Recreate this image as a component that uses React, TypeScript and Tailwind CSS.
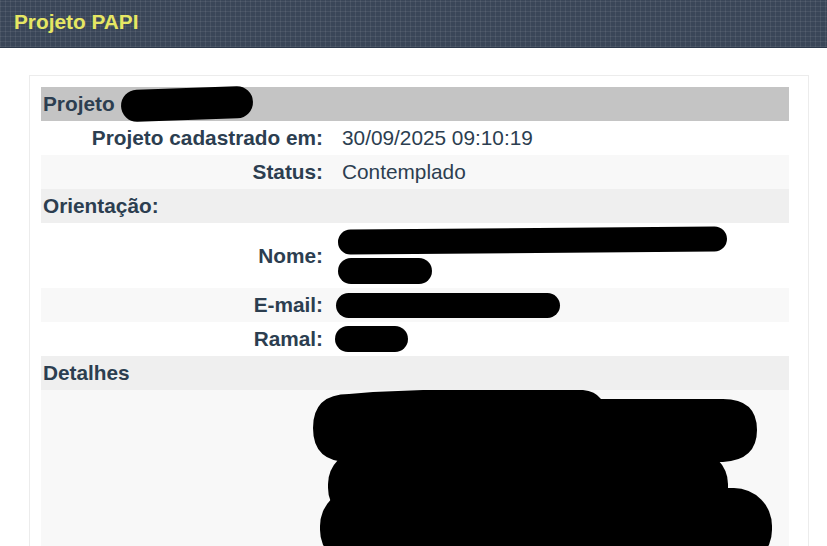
import React from "react";

const Label = ({ children }: { children: React.ReactNode }) => (
  <div className="flex items-center justify-end pr-[9px] font-bold">{children}</div>
);

const Blob = ({ w, h, className = "" }: { w: number; h: number; className?: string }) => (
  <span
    className={`block rounded-full bg-black ${className}`}
    style={{ width: w, height: h }}
  />
);

export default function App() {
  return (
    <div
      className="min-h-[546px] bg-white text-[#2c3e50]"
      style={{ fontFamily: '"Liberation Sans", Arial, sans-serif' }}
    >
      <header className="flex h-[48px] items-center border-b border-[#2d394b] bg-[#3a4658] bg-[repeating-linear-gradient(90deg,rgba(255,255,255,0.07)_0_1px,transparent_1px_5px),repeating-linear-gradient(0deg,rgba(255,255,255,0.07)_0_1px,transparent_1px_5px)] pb-[4px] pl-[14px]">
        <h1 className="text-[20.8px] font-bold text-[#e6e763]">Projeto PAPI</h1>
      </header>

      <div className="ml-[29px] mt-[27px] w-[780px] border border-b-0 border-[#ececec] pl-[11px] pt-[11px]">
        <div className="w-[748px] text-[20.8px] leading-[34px]">
          <div className="flex h-[34px] items-center bg-[#c4c4c4] pl-[2px] font-bold">
            <span>Projeto</span>
            <Blob w={132} h={32} className="ml-[6px] -rotate-[2deg]" />
          </div>

          <div className="grid grid-cols-[291px_1fr]">
            <Label>Projeto cadastrado em:</Label>
            <div className="pl-[10px]">30/09/2025 09:10:19</div>

            <div className="col-span-2 grid grid-cols-[291px_1fr] bg-[#f8f8f8]">
              <Label>Status:</Label>
              <div className="pl-[10px]">Contemplado</div>
            </div>

            <div className="col-span-2 bg-[#efefef] pl-[2px] font-bold">Orientação:</div>

            <div className="col-span-2 grid h-[65px] grid-cols-[291px_1fr]">
              <Label>Nome:</Label>
              <div className="flex flex-col justify-center gap-[5px] pl-[6px]">
                <Blob w={389} h={25} className="-rotate-[0.5deg]" />
                <Blob w={94} h={26} />
              </div>
            </div>

            <div className="col-span-2 grid grid-cols-[291px_1fr] bg-[#f8f8f8]">
              <Label>E-mail:</Label>
              <div className="flex items-center pl-[4px]">
                <Blob w={224} h={25} />
              </div>
            </div>

            <div className="col-span-2 grid grid-cols-[291px_1fr]">
              <Label>Ramal:</Label>
              <div className="flex items-center pl-[3px]">
                <Blob w={73} h={26} />
              </div>
            </div>

            <div className="col-span-2 bg-[#efefef] pl-[2px] font-bold">Detalhes</div>

            <div className="col-span-2 h-[170px] bg-[#f8f8f8] pl-[272px]">
              <svg width="460" height="170" viewBox="0 0 460 170" className="block">
                <path
                  d="M36 4 L60 2 L110 0 L270 0 Q282 1 288 9 L410 9 Q444 9 444 40 Q444 70 410 72 L36 72 Q0 72 0 38 Q0 4 36 4 Z"
                  fill="#000"
                />
                <rect x="15" y="60" width="400" height="72" rx="34" fill="#000" />
                <rect x="7" y="98" width="452" height="80" rx="38" fill="#000" />
              </svg>
            </div>
          </div>
        </div>
      </div>
    </div>
  );
}
